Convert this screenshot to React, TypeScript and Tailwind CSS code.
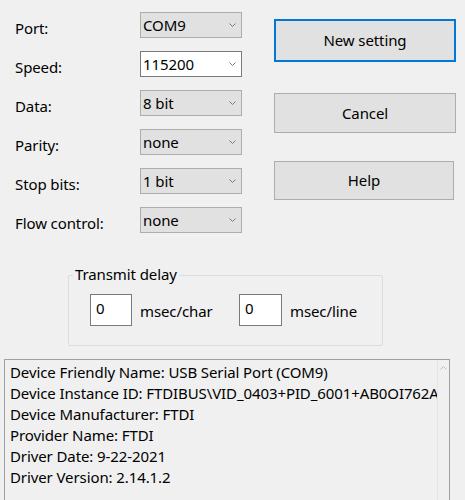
import React from 'react';

type ComboProps = {
  value: string;
  editable?: boolean;
};

const Chevron = () => (
  <svg width="7" height="4" viewBox="0 0 7 4" className="shrink-0">
    <path d="M0.5 0.5 L3.5 3.5 L6.5 0.5" fill="none" stroke="#7a7a7a" strokeWidth="1" />
  </svg>
);

const Combo: React.FC<ComboProps> = ({ value, editable }) => (
  <div
    className={
      editable
        ? 'flex h-[26px] w-[102px] items-center justify-between border border-[#7a7a7a] bg-white pl-[2px] pr-[5px]'
        : 'flex h-[26px] w-[102px] items-center justify-between border border-[#adadad] bg-[#e1e1e1] pl-[2px] pr-[5px]'
    }
  >
    <span className="leading-none">{value}</span>
    <Chevron />
  </div>
);

const rows: { label: string; value: string; editable?: boolean }[] = [
  { label: 'Port:', value: 'COM9' },
  { label: 'Speed:', value: '115200', editable: true },
  { label: 'Data:', value: '8 bit' },
  { label: 'Parity:', value: 'none' },
  { label: 'Stop bits:', value: '1 bit' },
  { label: 'Flow control:', value: 'none' },
];

const info = [
  'Device Friendly Name: USB Serial Port (COM9)',
  'Device Instance ID: FTDIBUS\\VID_0403+PID_6001+AB0OI762A',
  'Device Manufacturer: FTDI',
  'Provider Name: FTDI',
  'Driver Date: 9-22-2021',
  'Driver Version: 2.14.1.2',
];

export default function App() {
  return (
    <div
      className="h-[500px] w-[465px] overflow-hidden bg-[#f0f0f0] text-[15px] tracking-[-0.1px] text-black"
      style={{ fontFamily: '"Noto Sans", "Open Sans", sans-serif' }}
    >
      {/* top: settings + buttons */}
      <div className="flex">
        <div className="flex flex-col gap-[13px] pl-[15px] pt-[12px]">
          {rows.map((r) => (
            <div key={r.label} className="flex items-center">
              <span className="w-[125px] pt-[6px] leading-[20px]">{r.label}</span>
              <Combo value={r.value} editable={r.editable} />
            </div>
          ))}
        </div>
        <div className="ml-[32px] flex w-[182px] flex-col pt-[19px]">
          <button className="h-[43px] w-full border-2 border-[#0078d7] bg-[#e1e1e1]">New setting</button>
          <button className="mt-[31px] h-[40px] w-full border border-[#adadad] bg-[#e1e1e1]">Cancel</button>
          <button className="mt-[28px] h-[39px] w-[180px] border border-[#adadad] bg-[#e1e1e1]">Help</button>
        </div>
      </div>

      {/* transmit delay group */}
      <div className="relative ml-[68px] mt-[42px] h-[71px] w-[315px] rounded-[2px] border border-[#dcdcdc]">
        <span className="absolute left-[4px] top-[-12px] bg-[#f0f0f0] px-[2px] leading-[20px]">Transmit delay</span>
        <div className="flex items-center pl-[21px] pt-[18px]">
          <div className="h-[32px] w-[42px] border border-[#7a7a7a] bg-white pl-[5px] pt-[3px] leading-[20px]">0</div>
          <span className="ml-[8px] w-[99px] pt-[2px]">msec/char</span>
          <div className="h-[32px] w-[43px] border border-[#7a7a7a] bg-white pl-[5px] pt-[3px] leading-[20px]">0</div>
          <span className="ml-[8px] pt-[2px]">msec/line</span>
        </div>
      </div>

      {/* device info */}
      <div className="ml-[4px] mt-[13px] flex h-[160px] w-[446px] border border-[#a0a0a0]">
        <div className="flex-1 overflow-hidden whitespace-nowrap pl-[5px] pt-[2px] leading-[21px]">
          {info.map((line) => (
            <div key={line}>{line}</div>
          ))}
        </div>
        <div className="flex w-[12px] justify-center border-l border-[#e6e6e6] bg-[#f0f0f0] pt-[6px]">
          <svg width="7" height="4" viewBox="0 0 7 4">
            <path d="M0.5 3.5 L3.5 0.5 L6.5 3.5" fill="none" stroke="#c0c0c0" strokeWidth="1" />
          </svg>
        </div>
      </div>
    </div>
  );
}
